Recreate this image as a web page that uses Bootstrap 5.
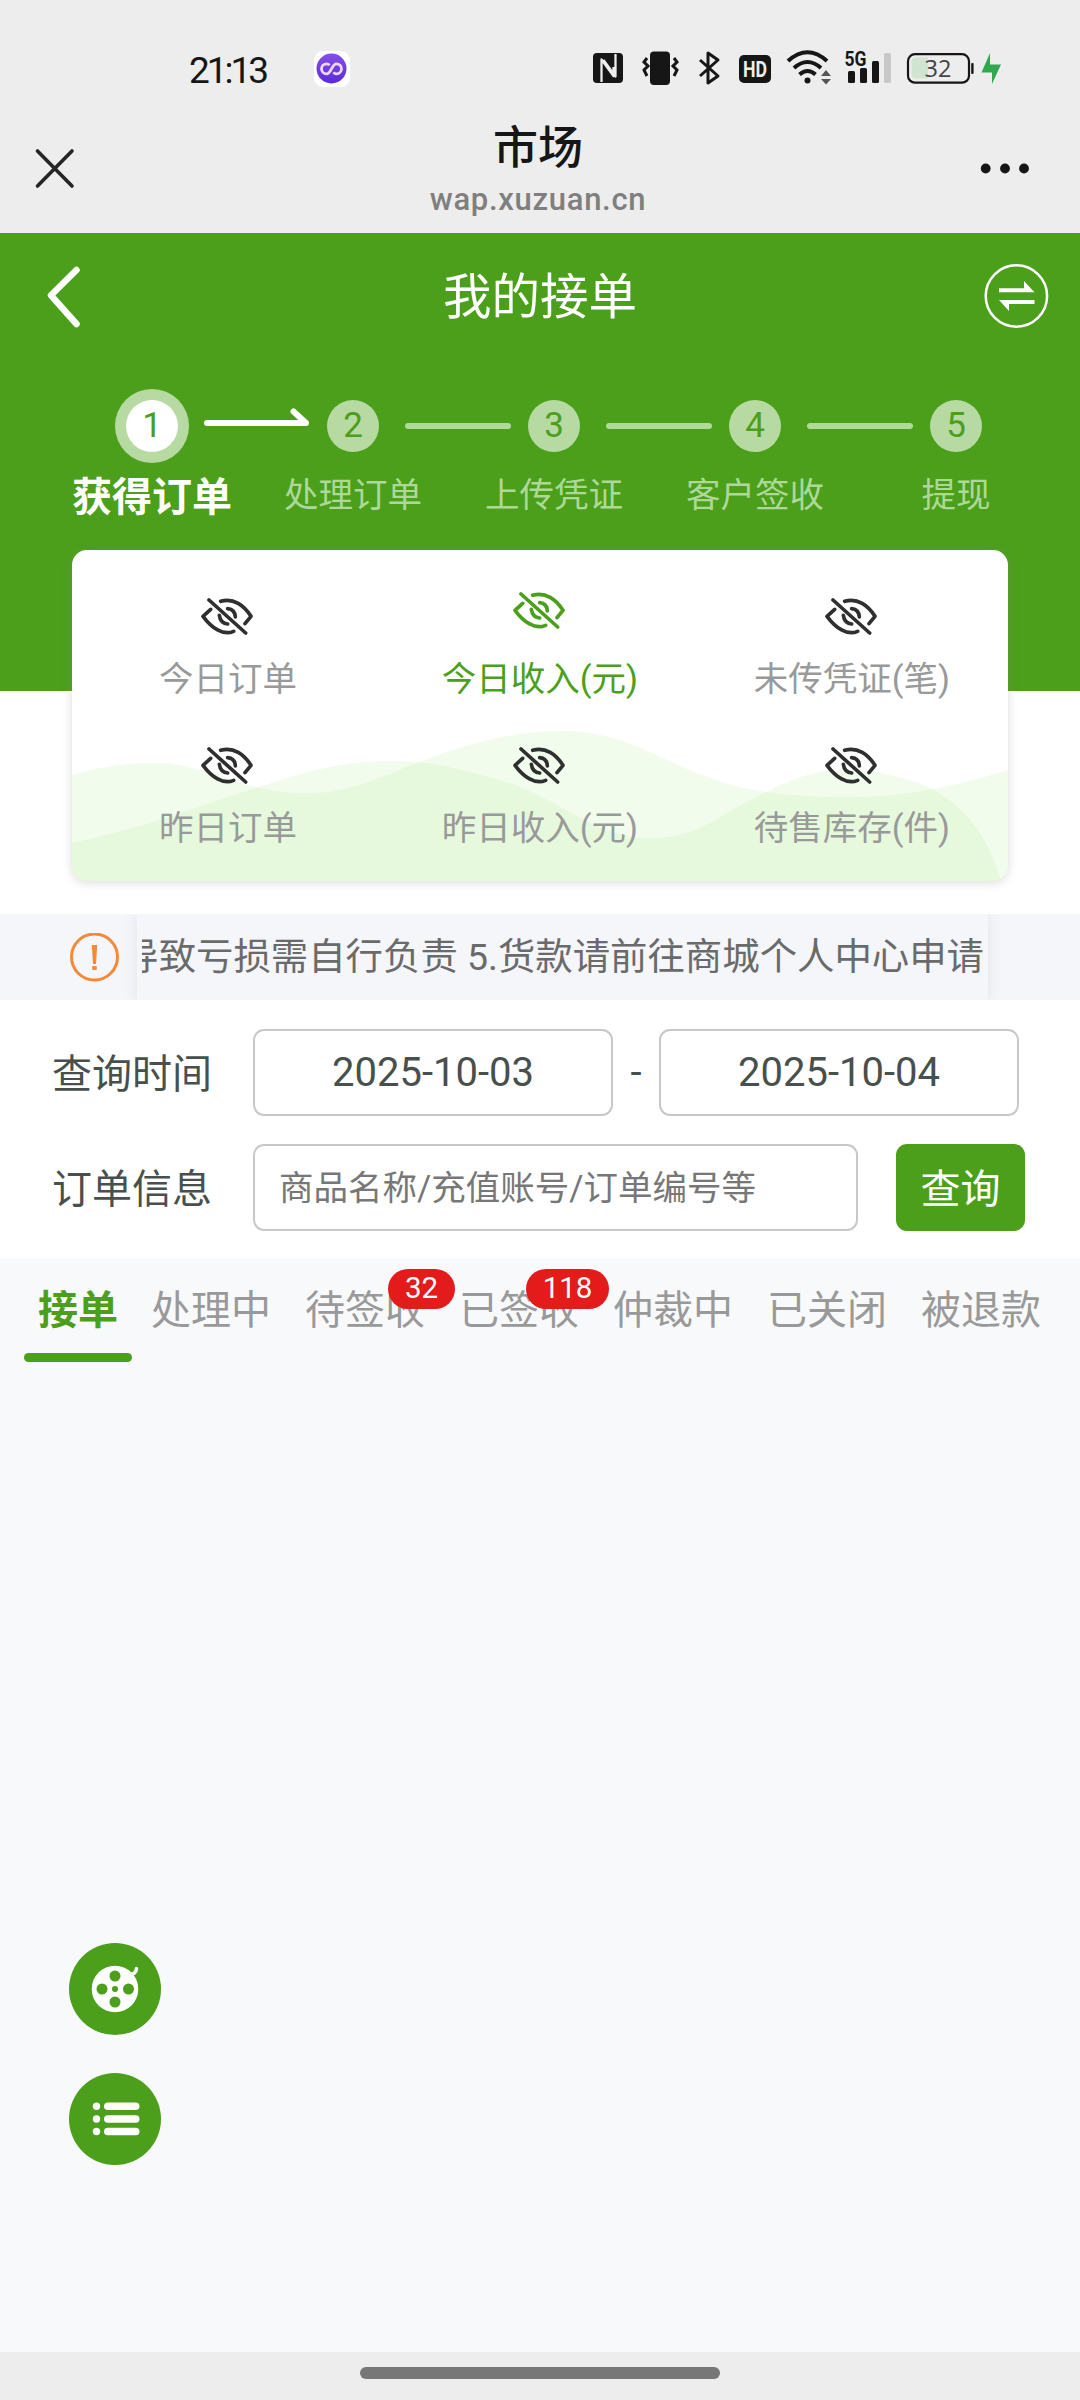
<!DOCTYPE html>
<html lang="zh-CN">
<head>
<meta charset="utf-8">
<meta name="viewport" content="width=device-width, initial-scale=1">
<title>市场</title>
<link href="https://cdn.jsdelivr.net/npm/bootstrap@5.3.0/dist/css/bootstrap.min.css" rel="stylesheet">
<style>
:root{--brand:#4b9f1b}
body{width:1080px;height:2400px;overflow:hidden;background:#f8f9fb;font-family:Roboto,"Noto Sans CJK SC",sans-serif;line-height:1}
svg{display:block;flex:none}
.status-bar{height:105px;padding:31px 74px 0 189px;color:#161616}
.clock{font-size:37px;font-weight:400;letter-spacing:-3px;width:125px;line-height:79px;height:77px}
.app-bar{height:128px;padding:0 50px 0 34px}
.app-heading{padding-top:18px}
.app-title{font-size:45px;font-weight:500;line-height:52px;color:#161616}
.app-url{font-size:31px;font-weight:500;line-height:38px;color:#7f7f7f;letter-spacing:.7px;padding-top:6px}
.chrome{background:#ededed}
.hero{height:317px;background:var(--brand)}
.overview{height:450px;background:linear-gradient(var(--brand) 141px,#fff 141px)}
.page-nav{height:126px;padding:0 30px 0 44px;color:#fff}
.page-nav h1{font-size:48.5px;font-weight:400;line-height:1;padding-top:4px}
.steps{padding:30px 23px 0 51.5px}
.step-item{width:201px;flex:none}
.step-dot{width:52px;height:52px;border-radius:50%;background:#b7d9a2;color:var(--brand);font-size:35px;line-height:52px;margin-top:11px}
.step-item.current .step-dot{background:#fff;box-shadow:0 0 0 11px #b7d9a2}
.step-name{font-size:34.5px;color:#add998;line-height:40px;margin-top:23px;white-space:nowrap}
.step-item.current .step-name{font-size:40px;font-weight:700;color:#fff;margin-top:26px}
.step-line{width:106px;height:6px;border-radius:3px;background:#b0d99a;left:152px;top:34px}
.step-arrow{left:152px;top:17px}
.stats{width:936px;height:331px;border-radius:15px;background:#fff;box-shadow:0 2px 10px rgba(150,140,150,.3);overflow:hidden}
.stat-cell{height:149px;padding-top:48px;color:#999;font-size:34.5px;line-height:40px}
.stat-cell svg{color:#2f2f2f;margin:0 auto;transform:translateX(-1px)}
.stat-cell.hot{padding-top:42px;color:var(--brand)}
.stat-cell.hot svg{color:var(--brand)}
.stat-cell div{margin-top:24px}
.stat-cell.hot div{margin-top:30px}
.notice{height:86px;margin-top:33px;background:#f4f6fa;padding-left:70px}
.marquee{width:851px;height:86px;margin-left:18px;padding:0 4px 0 5px;box-shadow:0 0 14px rgba(60,60,80,.1);clip-path:inset(0 -20px);background:#f4f6fa}
.marquee-inner{overflow:hidden;font-size:37.4px;color:#6a6a6a;height:86px;line-height:86px;white-space:nowrap}
.query{height:258px;padding:29px 54px 0 52px;background:#fff;font-size:40px;color:#47504c}
.query .line-row{height:87px;margin-bottom:28px}
.query label{width:201px;flex:none;padding-top:4px}
.query .form-control{border:2px solid #c8c8c8;border-radius:11px;height:87px;font-size:40px;color:#47504c;line-height:1;padding:0 24px}
.query .date{width:360px;text-align:center}
.query .key{width:605px;font-size:34.5px}
.query .key::placeholder{color:#777;opacity:1}
.query .btn{width:129px;height:87px;background:var(--brand);border:0;color:#fff;font-size:40px;border-radius:11px;margin-left:38px;padding:4px 0 0}
.tabs{height:105px;padding:0 0 0 1px;font-size:40px;color:#999}
.tabs .tab-cell{width:154px;flex:none;line-height:46px;padding-top:30px;white-space:nowrap;position:relative}
.tabs .active{font-weight:700;color:var(--brand);margin-right:-21px}
.tabs .active::after{content:"";display:block;width:108px;height:9px;border-radius:5px;background:var(--brand);margin-top:19px}
.count{position:absolute;top:11px;height:40px;border-radius:20px;background:#e31b1b;color:#fff;font-size:29.5px;line-height:39px;text-align:center}
.count-two{left:100px;width:67px}
.count-three{left:84px;width:83px}
.floats{padding:580px 0 0 69px;gap:38px;height:989px}
.home{height:48px;padding-top:15px}
.home div{width:360px;height:12px;border-radius:6px;background:#777}
</style>
</head>
<body>
<svg width="0" height="0" class="position-absolute">
<defs>
<symbol id="eye" viewBox="0 0 156 111">
<g fill="none" stroke="currentColor" stroke-width="11" stroke-linecap="round" stroke-linejoin="round">
<path d="M24 6 134 105M59 10C98-2 130 24 150 55L132 77M29 34 6 55C32 90 66 114 98 100M80 32Q102 34 103 57M55 52Q58 76 80 78"/></g>
</symbol>
</defs>
</svg>

<header class="chrome">
  <div class="status-bar d-flex">
    <div class="clock">21:13</div>
    <svg width="36" height="77" viewBox="314 31 36 77">
      <defs><linearGradient id="vg" x1="0" y1="0" x2="0" y2="1"><stop offset="0" stop-color="#8450e8"/><stop offset="1" stop-color="#5b2bd8"/></linearGradient></defs>
      <rect x="314" y="51" width="36" height="36" rx="9" fill="#fff"/><circle cx="331.500" cy="68.500" r="15" fill="url(#vg)"/>
      <path d="M329.500 65.200Q328.500 63.800 326.500 63.800A5 5 0 1 0 326.500 73.800C331.500 73.800 331.500 63.800 336.500 63.800A5 5 0 1 1 336.500 73.800Q334.500 73.800 333.500 72.200" fill="none" stroke="#efd6ff" stroke-width="2.800"/>
    </svg>
    <svg class="ms-auto" width="415" height="77" viewBox="591 31 415 77" fill="#161616">
      <rect x="593" y="53" width="30" height="30" rx="4"/>
      <path d="M601.500 82V59.500L613.500 76V67M615.500 54V76.500L603.500 60" fill="none" stroke="#ededed" stroke-width="2.300" stroke-linejoin="round"/>
      <rect x="650" y="51.500" width="20" height="33.500" rx="4"/>
      <path d="M647 58 644 62 648 66 644 70 647 76M674 58 677 62 673 66 677 70 674 76" fill="none" stroke="#161616" stroke-width="3"/>
      <path d="M700 60 718 76 708 83V53L718 60 700 76" fill="none" stroke="#161616" stroke-width="3" stroke-linejoin="round"/>
      <rect x="739" y="55" width="32" height="28" rx="5"/>
      <text x="755" y="76.500" text-anchor="middle" font-size="21.500" font-weight="700" fill="#ededed" textLength="24" lengthAdjust="spacingAndGlyphs">HD</text>
      <g fill="none" stroke="#161616" stroke-width="4"><path d="M788 61Q807.500 43.500 827 61M794 68Q807.500 56 821 68M799.500 74.500Q807.500 67.500 815.500 74.500"/></g>
      <circle cx="807.500" cy="80.500" r="3"/>
      <path d="M821 76 826 70 831 76ZM821 79 826 84.500 831 79Z" fill="#555"/>
      <text x="844.500" y="66" font-size="20.500" font-weight="700" textLength="22" lengthAdjust="spacingAndGlyphs">5G</text>
      <rect x="848" y="71" width="7" height="12" rx="1.500"/><rect x="860" y="68" width="7" height="15" rx="1.500"/><rect x="872" y="61" width="7" height="22" rx="1.500"/><rect x="884" y="53" width="7" height="30" rx="1.500" fill="#c8c8c8"/>
      <path d="M916 57.500H928V78.500H916Q911.500 78.500 911.500 74V62Q911.500 57.500 916 57.500Z" fill="#cfe5d2"/>
      <rect x="908" y="54.200" width="61" height="28.500" rx="7" fill="none" stroke="#161616" stroke-width="2.200"/>
      <rect x="971.200" y="63" width="2.400" height="11" rx="1"/>
      <text x="938" y="77" text-anchor="middle" font-size="23.500" fill="#444" font-family="Open Sans">32</text>
      <path d="M990 53V64.500H1001L992 84V72.500H981.500Z" fill="#2fa84f"/>
    </svg>
  </div>
  <div class="app-bar d-flex justify-content-between">
    <svg width="62" height="128" viewBox="34 105 62 128"><path d="M37.500 151 72 186M72 151 37.500 186" stroke="#252525" stroke-width="3.600" stroke-linecap="round"/></svg>
    <div class="app-heading text-center"><div class="app-title">市场</div><div class="app-url">wap.xuzuan.cn</div></div>
    <svg width="50" height="128" viewBox="980 105 50 128" fill="#161616"><circle cx="985.700" cy="168.500" r="4.900"/><circle cx="1005" cy="168.500" r="4.900"/><circle cx="1024" cy="168.500" r="4.900"/></svg>
  </div>
</header>

<section class="hero">
  <nav class="page-nav d-flex align-items-center justify-content-between">
    <svg width="54" height="126" viewBox="44 233 54 126"><path d="M76.500 270 51 295.300 76.500 324" fill="none" stroke="#fff" stroke-width="6.500" stroke-linecap="round" stroke-linejoin="round"/></svg>
    <h1 class="m-0">我的接单</h1>
    <svg width="68" height="126" viewBox="982 233 68 126"><circle cx="1016.400" cy="296" r="30.700" fill="none" stroke="#fff" stroke-width="2.500"/><path d="M999 288.200H1024V281L1034.500 292.200H999ZM1034.500 300H999L1009 311V304H1034.500Z" fill="#fff"/></svg>
  </nav>
  <div class="steps d-flex">
    <div class="step-item current position-relative d-flex flex-column align-items-center text-center"><div class="step-dot">1</div><div class="step-name">获得订单</div>
      <svg class="step-arrow position-absolute" width="108" height="24" viewBox="204 406 108 24"><path d="M207 423H306L293.500 411.500" fill="none" stroke="#fff" stroke-width="6" stroke-linecap="round" stroke-linejoin="round"/></svg></div>
    <div class="step-item position-relative d-flex flex-column align-items-center text-center"><div class="step-dot">2</div><div class="step-name">处理订单</div><div class="step-line position-absolute"></div></div>
    <div class="step-item position-relative d-flex flex-column align-items-center text-center"><div class="step-dot">3</div><div class="step-name">上传凭证</div><div class="step-line position-absolute"></div></div>
    <div class="step-item position-relative d-flex flex-column align-items-center text-center"><div class="step-dot">4</div><div class="step-name">客户签收</div><div class="step-line position-absolute"></div></div>
    <div class="step-item position-relative d-flex flex-column align-items-center text-center"><div class="step-dot">5</div><div class="step-name">提现</div></div>
  </div>
</section>

<section class="overview">
  <div class="stats mx-auto position-relative">
    <svg class="position-absolute top-0 start-0" width="936" height="331" viewBox="0 0 936 331" fill="rgb(110,225,55)" fill-opacity=".09">
      <path d="M0 225C30 216 55 213 81 213C120 213 150 228 188 238C265 256 310 224 348 212C390 196 435 181 492 181C535 181 570 198 595 210C640 231 665 238 695 242C720 246 745 247 778 247C840 247 890 234 936 220V331H0Z"/>
      <path d="M0 293Q45 283 88 270C125 258 150 248 181 239C215 228 235 221 268 215Q315 208 355 213C385 218 410 225 435 232C470 244 495 262 525 276C555 290 585 293 623 280C650 268 668 254 695 242C720 228 745 220 771 220C805 220 835 227 860 239C895 258 915 285 929 331H0Z"/>
    </svg>
    <div class="row row-cols-3 g-0 text-center position-relative">
      <div class="col stat-cell"><svg width="52" height="37"><use href="#eye"/></svg><div>今日订单</div></div>
      <div class="col stat-cell hot"><svg width="52" height="37"><use href="#eye"/></svg><div>今日收入(元)</div></div>
      <div class="col stat-cell"><svg width="52" height="37"><use href="#eye"/></svg><div>未传凭证(笔)</div></div>
      <div class="col stat-cell"><svg width="52" height="37"><use href="#eye"/></svg><div>昨日订单</div></div>
      <div class="col stat-cell"><svg width="52" height="37"><use href="#eye"/></svg><div>昨日收入(元)</div></div>
      <div class="col stat-cell"><svg width="52" height="37"><use href="#eye"/></svg><div>待售库存(件)</div></div>
    </div>
  </div>
  <div class="notice d-flex align-items-center">
    <svg width="49" height="49" viewBox="0 0 49 49"><circle cx="24.500" cy="24" r="23" fill="none" stroke="#f08a3c" stroke-width="3"/><path d="M21.800 12H27.200L26 31H23ZM22.300 33H26.700V37H22.300Z" fill="#f08a3c"/></svg>
    <div class="marquee"><div class="marquee-inner d-flex justify-content-end"><span>导致亏损需自行负责 5.货款请前往商城个人中心申请</span></div></div>
  </div>
</section>

<form class="query">
  <div class="line-row d-flex align-items-center">
    <label>查询时间</label><input class="form-control date" value="2025-10-03"><span class="flex-fill text-center">-</span><input class="form-control date" value="2025-10-04"><i style="width:7px"></i>
  </div>
  <div class="line-row d-flex align-items-center">
    <label>订单信息</label><input class="form-control key" placeholder="商品名称/充值账号/订单编号等"><button type="button" class="btn">查询</button>
  </div>
</form>

<nav class="tabs d-flex">
  <div class="tab-cell active d-flex flex-column align-items-center">接单</div>
  <div class="tab-cell text-center">处理中</div>
  <div class="tab-cell text-center">待签收<span class="count count-two">32</span></div>
  <div class="tab-cell text-center">已签收<span class="count count-three">118</span></div>
  <div class="tab-cell text-center">仲裁中</div>
  <div class="tab-cell text-center">已关闭</div>
  <div class="tab-cell text-center">被退款</div>
</nav>

<aside class="floats d-flex flex-column">
  <svg width="92" height="92" viewBox="0 0 92 92"><circle cx="46" cy="46" r="46" fill="#4b9f1b"/><circle cx="46" cy="46" r="23.300" fill="#fff"/><path d="M60 31Q67 32 67.500 25.500" fill="none" stroke="#fff" stroke-width="3.500" stroke-linecap="round"/><g fill="#4b9f1b"><circle cx="46" cy="33" r="5.500"/><circle cx="46" cy="59" r="5.500"/><circle cx="33" cy="46" r="5.500"/><circle cx="59.500" cy="46" r="5.500"/><circle cx="46" cy="46" r="3"/></g></svg>
  <svg width="92" height="92" viewBox="0 0 92 92"><circle cx="46" cy="46" r="46" fill="#4b9f1b"/><g fill="#fff"><circle cx="27.500" cy="33.300" r="3.700"/><circle cx="27.500" cy="46" r="3.700"/><circle cx="27.500" cy="58.500" r="3.700"/><rect x="35" y="29.500" width="35.500" height="7.600" rx="3.800"/><rect x="35" y="42.200" width="35.500" height="7.600" rx="3.800"/><rect x="35" y="54.700" width="35.500" height="7.600" rx="3.800"/></g></svg>
</aside>
<footer class="home chrome d-flex justify-content-center"><div></div></footer>
<script src="https://cdn.jsdelivr.net/npm/bootstrap@5.3.0/dist/js/bootstrap.bundle.min.js"></script>
</body>
</html>
